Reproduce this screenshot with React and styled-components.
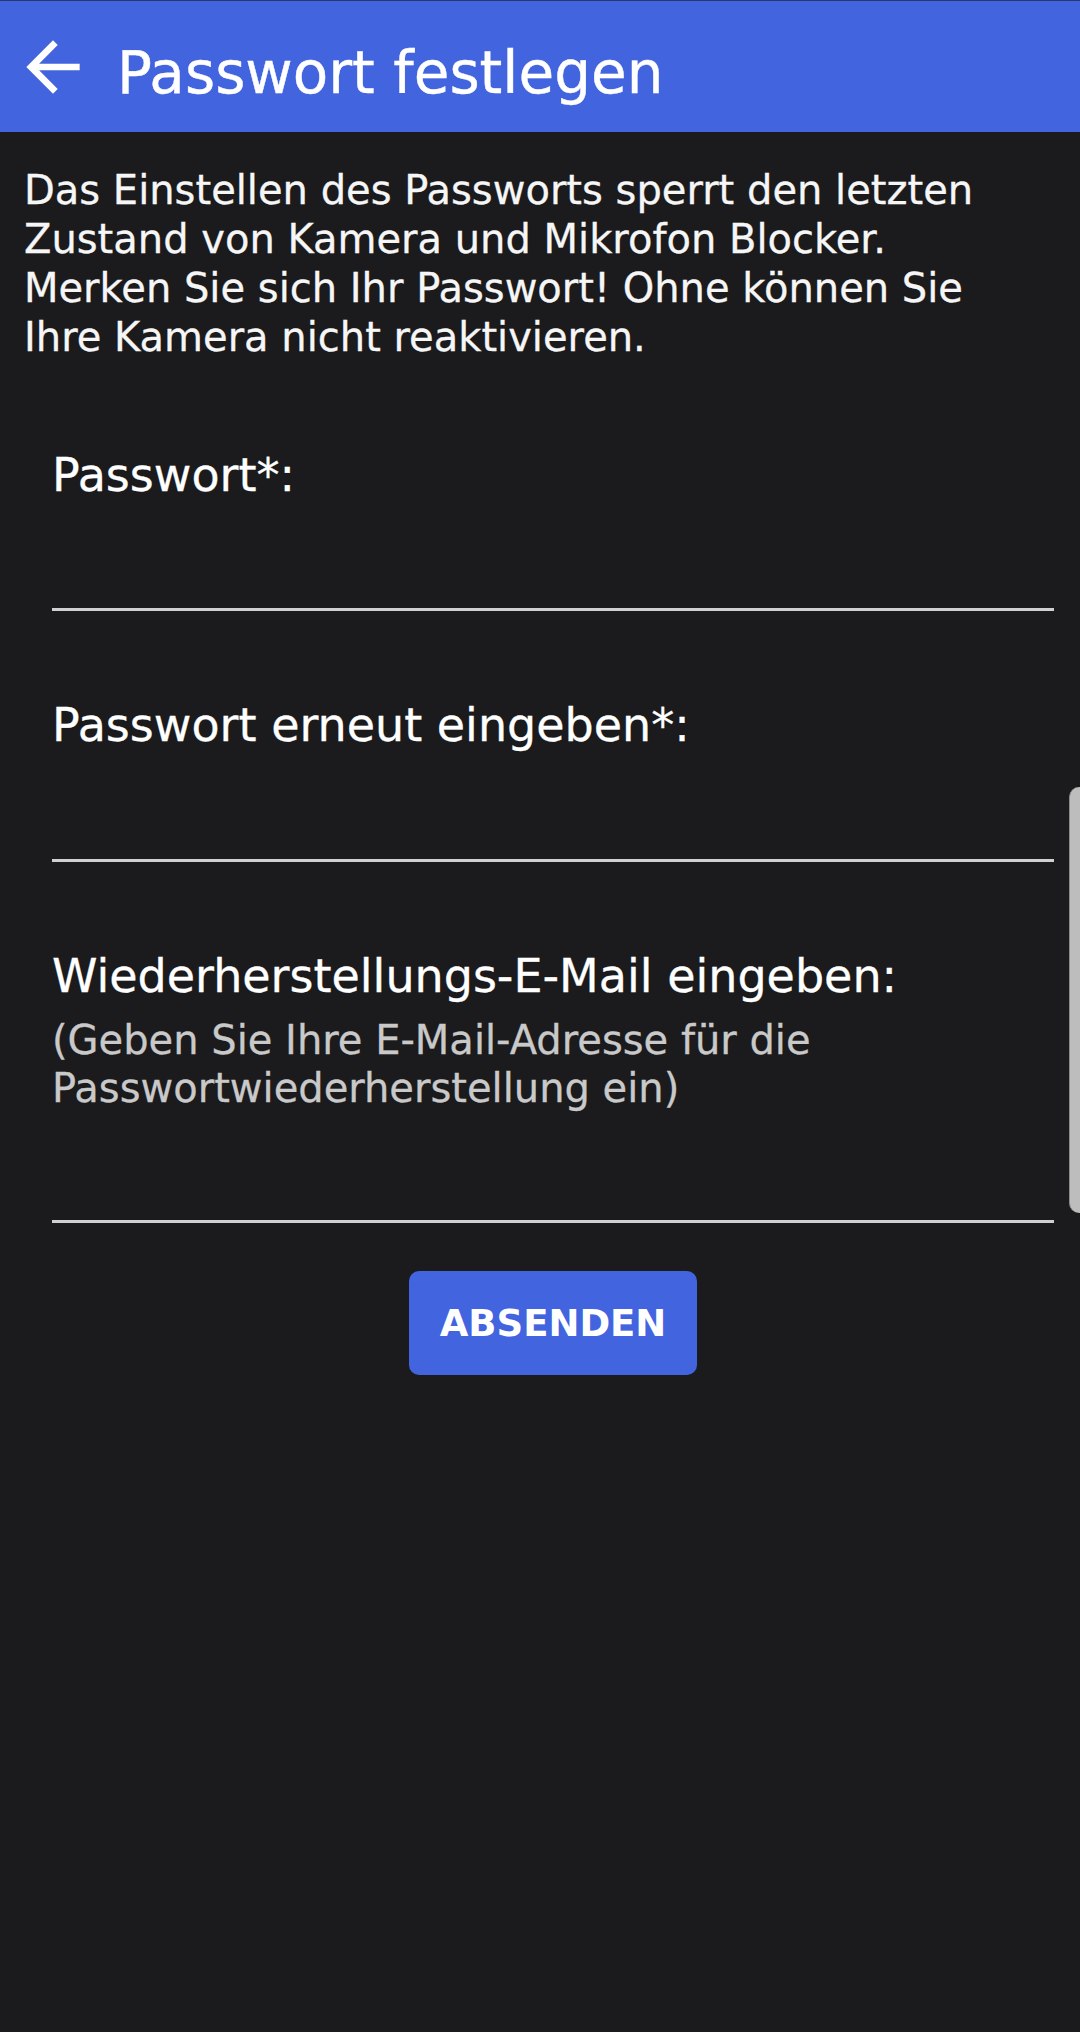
import React from "react";
import styled, { createGlobalStyle } from "styled-components";

const GlobalStyle = createGlobalStyle`
  html, body {
    margin: 0;
    padding: 0;
    background: #1b1b1d;
  }
  body {
    font-family: "DejaVu Sans", "Noto Sans", sans-serif;
    color: #f4f4f4;
  }
  * { box-sizing: border-box; }
`;

const Page = styled.div`
  position: relative;
  min-height: 2032px;
  background: #1b1b1d;
  overflow: hidden;
`;

const Header = styled.header`
  height: 132px;
  background: #4264df;
  border-top: 1px solid #28386f;
  display: flex;
  align-items: center;
  padding-left: 13px;
  gap: 24px;
`;

const BackButton = styled.button`
  width: 80px;
  height: 80px;
  padding: 0;
  border: none;
  background: transparent;
  display: flex;
  align-items: center;
  justify-content: center;
  color: #ffffff;
  svg { display: block; }
`;

const Title = styled.h1`
  margin: 12px 0 0;
  font-size: 58px;
  line-height: 58px;
  font-weight: 400;
  color: #ffffff;
  white-space: nowrap;
  -webkit-text-stroke: 0.4px #ffffff;
`;

const Intro = styled.p`
  margin: 34px 0 0;
  padding: 0 24px;
  font-size: 40px;
  line-height: 49px;
  color: #f6f6f6;
  -webkit-text-stroke: 0.3px #f6f6f6;
`;

const Form = styled.form`
  display: flex;
  flex-direction: column;
  padding: 86px 26px 0 52px;
`;

const Field = styled.div`
  display: flex;
  flex-direction: column;
  margin-bottom: ${(p) => (p.$last ? 48 : 87)}px;
`;

const Label = styled.label`
  font-size: 46px;
  line-height: 54px;
  color: #ffffff;
  -webkit-text-stroke: 0.3px #ffffff;
`;

const Hint = styled.span`
  margin-top: 13px;
  font-size: 40px;
  line-height: 48px;
  color: #c9c9c9;
  -webkit-text-stroke: 0.3px #c9c9c9;
`;

const Input = styled.input`
  height: ${(p) => p.$h}px;
  border: none;
  border-bottom: 3px solid #d0d0d0;
  background: transparent;
  color: #ffffff;
  font-family: inherit;
  font-size: 40px;
  outline: none;
  padding: 0;
`;

const SubmitRow = styled.div`
  display: flex;
  justify-content: center;
`;

const SubmitButton = styled.button`
  width: 288px;
  height: 104px;
  border: none;
  border-radius: 10px;
  background: #4264df;
  color: #ffffff;
  font-family: "DejaVu Sans", sans-serif;
  font-weight: 700;
  font-size: 37px;
  padding: 0;
`;

const ScrollThumb = styled.div`
  position: absolute;
  right: 0;
  top: 787px;
  width: 11px;
  height: 426px;
  background: #bdbdbd;
  border-left: 1px solid #8a8a8a;
  border-radius: 10px 0 0 10px;
`;

const ArrowBack = () => (
  <svg width="80" height="80" viewBox="0 0 24 24" fill="currentColor">
    <path d="M20 11H7.83l5.59-5.59L12 4l-8 8 8 8 1.41-1.41L7.83 13H20v-2z" />
  </svg>
);

export default function App() {
  return (
    <>
      <GlobalStyle />
      <Page>
        <Header>
          <BackButton aria-label="Zurück">
            <ArrowBack />
          </BackButton>
          <Title>Passwort festlegen</Title>
        </Header>
        <Intro>
          Das Einstellen des Passworts sperrt den letzten
          <br />
          Zustand von Kamera und Mikrofon Blocker.
          <br />
          Merken Sie sich Ihr Passwort! Ohne können Sie
          <br />
          Ihre Kamera nicht reaktivieren.
        </Intro>
        <Form onSubmit={(e) => e.preventDefault()}>
          <Field>
            <Label htmlFor="pw">Passwort*:</Label>
            <Input id="pw" type="password" $h={109} />
          </Field>
          <Field>
            <Label htmlFor="pw2">Passwort erneut eingeben*:</Label>
            <Input id="pw2" type="password" $h={110} />
          </Field>
          <Field $last>
            <Label htmlFor="mail">Wiederherstellungs-E-Mail eingeben:</Label>
            <Hint>
              (Geben Sie Ihre E-Mail-Adresse für die
              <br />
              Passwortwiederherstellung ein)
            </Hint>
            <Input id="mail" type="email" $h={111} />
          </Field>
          <SubmitRow>
            <SubmitButton type="submit">ABSENDEN</SubmitButton>
          </SubmitRow>
        </Form>
        <ScrollThumb />
      </Page>
    </>
  );
}
